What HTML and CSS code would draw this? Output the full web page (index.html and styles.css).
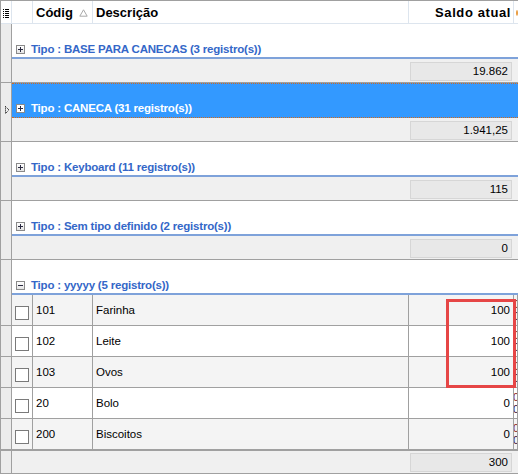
FILE: index.html
```html
<!DOCTYPE html>
<html>
<head>
<meta charset="utf-8">
<link rel="stylesheet" href="styles.css">
</head>
<body>
<div class="grid">
  <div class="hdr">
    <div class="ind hind">
      <svg width="10" height="22" viewBox="0 0 10 22">
        <g fill="#000">
          <rect x="3" y="8" width="1" height="1"/><rect x="5" y="8" width="4" height="1"/>
          <rect x="3" y="10" width="1" height="1"/><rect x="5" y="10" width="4" height="1"/>
          <rect x="3" y="12" width="1" height="1"/><rect x="5" y="12" width="4" height="1"/>
          <rect x="3" y="14" width="1" height="1"/><rect x="5" y="14" width="4" height="1"/>
          <rect x="3" y="16" width="1" height="1"/><rect x="5" y="16" width="4" height="1"/>
        </g>
      </svg>
    </div>
    <div class="c-chk hc"></div>
    <div class="c-cod hc">Códig<svg class="sort" width="9" height="8" viewBox="0 0 9 8"><path d="M4.5 0.8 L8.2 7.2 L0.8 7.2 Z" fill="none" stroke="#a8a8a8" stroke-width="1"/></svg></div>
    <div class="c-desc hc">Descrição</div>
    <div class="c-saldo hc"><span class="saldo-t">Saldo atual</span></div>
    <div class="c-x hc"><span class="odot"></span></div>
  </div>

  <div class="grp">
    <div class="ind"></div>
    <div class="gcell"><span class="exp"></span><span class="gtext">Tipo : BASE PARA CANECAS (3 registro(s))</span></div>
  </div>
  <div class="foot">
    <div class="ind"></div>
    <div class="fcell"><span class="sum">19.862</span></div>
  </div>

  <div class="grp sel">
    <div class="ind"><svg class="arrow" width="10" height="10" viewBox="0 0 10 10"><path d="M4.5 1.5 L8 5 L4.5 8.5 Z" fill="none" stroke="#000" stroke-width="1" stroke-dasharray="1 1"/></svg></div>
    <div class="gcell"><span class="exp"></span><span class="gtext">Tipo : CANECA (31 registro(s))</span></div>
  </div>
  <div class="foot">
    <div class="ind"></div>
    <div class="fcell"><span class="sum">1.941,25</span></div>
  </div>

  <div class="grp">
    <div class="ind"></div>
    <div class="gcell"><span class="exp"></span><span class="gtext">Tipo : Keyboard (11 registro(s))</span></div>
  </div>
  <div class="foot">
    <div class="ind"></div>
    <div class="fcell"><span class="sum">115</span></div>
  </div>

  <div class="grp">
    <div class="ind"></div>
    <div class="gcell"><span class="exp"></span><span class="gtext">Tipo : Sem tipo definido (2 registro(s))</span></div>
  </div>
  <div class="foot">
    <div class="ind"></div>
    <div class="fcell"><span class="sum">0</span></div>
  </div>

  <div class="grp">
    <div class="ind"></div>
    <div class="gcell"><span class="exp minus"></span><span class="gtext">Tipo : yyyyy (5 registro(s))</span></div>
  </div>

  <div class="rows">
    <div class="row alt">
      <div class="ind"></div>
      <div class="c-chk"><span class="cb"></span></div>
      <div class="c-cod">101</div>
      <div class="c-desc">Farinha</div>
      <div class="c-saldo">100</div>
      <div class="c-x"><span class="x1">0</span><span class="x2">0</span></div>
    </div>
    <div class="row">
      <div class="ind"></div>
      <div class="c-chk"><span class="cb"></span></div>
      <div class="c-cod">102</div>
      <div class="c-desc">Leite</div>
      <div class="c-saldo">100</div>
      <div class="c-x"><span class="x1">0</span><span class="x2">0</span></div>
    </div>
    <div class="row alt">
      <div class="ind"></div>
      <div class="c-chk"><span class="cb"></span></div>
      <div class="c-cod">103</div>
      <div class="c-desc">Ovos</div>
      <div class="c-saldo">100</div>
      <div class="c-x"><span class="x1">0</span><span class="x2">0</span></div>
    </div>
    <div class="row">
      <div class="ind"></div>
      <div class="c-chk"><span class="cb"></span></div>
      <div class="c-cod">20</div>
      <div class="c-desc">Bolo</div>
      <div class="c-saldo">0</div>
      <div class="c-x"><span class="x1">0</span><span class="x2">0</span></div>
    </div>
    <div class="row alt">
      <div class="ind"></div>
      <div class="c-chk"><span class="cb"></span></div>
      <div class="c-cod">200</div>
      <div class="c-desc">Biscoitos</div>
      <div class="c-saldo">0</div>
      <div class="c-x"><span class="x1">0</span><span class="x2">0</span></div>
    </div>
    <div class="redbox"></div>
  </div>
  <div class="foot last">
    <div class="ind"></div>
    <div class="fcell"><span class="sum">300</span></div>
  </div>
</div>
</body>
</html>
```

FILE: styles.css
```css
* { box-sizing: border-box; }
html, body { margin: 0; padding: 0; background: #fff; }
body {
  width: 518px;
  height: 476px;
  overflow: hidden;
  font-family: "Liberation Sans", Arial, sans-serif;
  font-size: 11.5px;
  color: #000;
}
.grid {
  border-left: 1px solid #a0a0a0;
  border-top: 1px solid #a0a0a0;
  width: 518px;
}
.ind {
  width: 11px;
  flex: none;
  background: #ececec;
  border-right: 1px solid #a0a0a0;
}

/* header */
.hdr {
  display: flex;
  height: 23px;
  border-bottom: 1px solid #dde5ee;
  background: #fff;
}
.hind { background: #fff; border-right: 1px solid #dde5ee; }
.hind svg { display: block; margin-left: -1px; }
.hc {
  display: flex;
  align-items: center;
  font-weight: bold;
  font-size: 13px;
  border-right: 1px solid #dde5ee;
}
.hdr .c-cod { padding-left: 3px; }
.hdr .c-desc { padding-left: 3px; }
.hdr .c-saldo { justify-content: flex-end; padding-right: 2px; }
.saldo-t { letter-spacing: 0.6px; }
.sort { margin-left: 6px; margin-top: 1px; }
.hdr .c-x { border-right: none; }
.odot {
  display: block;
  width: 6px; height: 6px;
  border-radius: 50%;
  background: #e89a3c;
  margin-left: 2px;
  margin-top: 1px;
}

/* columns */
.c-chk { width: 21px; flex: none; }
.c-cod { width: 60px; flex: none; }
.c-desc { width: 316px; flex: none; }
.c-saldo { width: 105px; flex: none; }
.c-x { flex: 1; overflow: hidden; }

/* group rows */
.grp { display: flex; height: 35px; }
.gcell {
  flex: 1;
  display: flex;
  align-items: center;
  padding-top: 17px;
  border-bottom: 2px solid #7ea2da;
  background: #fff;
}
.exp {
  position: relative;
  display: block;
  width: 9px; height: 9px;
  margin-left: 4px;
  margin-right: 6px;
  border: 1px solid #8a8a8a;
  background: linear-gradient(#ffffff, #e4e4e4);
}
.exp::before {
  content: "";
  position: absolute;
  left: 1px; top: 3px;
  width: 5px; height: 1px;
  background: #2a2a40;
}
.exp::after {
  content: "";
  position: absolute;
  left: 3px; top: 1px;
  width: 1px; height: 5px;
  background: #2a2a40;
}
.exp.minus::after { display: none; }
.gtext {
  font-weight: bold;
  font-size: 11.5px;
  letter-spacing: -0.2px;
  color: #3467c8;
  white-space: nowrap;
}
.sel .gcell {
  background: #3399ff;
  border-top: 1px dotted #d06a20;
  border-bottom: 1px dotted #d06a20;
  padding-top: 15px;
}
.sel .gtext { color: #fff; }
.sel .exp { background: #fff; }
.sel .ind {
  display: flex;
  align-items: flex-end;
  padding-bottom: 3px;
}
.arrow { display: block; margin-left: 0; }

/* footers */
.foot {
  display: flex;
  height: 24px;
  border-bottom: 1px solid #a0a0a0;
}
.fcell {
  flex: 1;
  background: #f0f0f0;
  padding-top: 3px;
}
.sum {
  display: block;
  margin-left: 398px;
  width: 102px;
  height: 19px;
  line-height: 17px;
  text-align: right;
  padding-right: 3px;
  background: #e8e8e8;
  border: 1px solid #d6d6d6;
}

/* data rows */
.rows { position: relative; }
.row {
  display: flex;
  height: 31px;
  border-bottom: 1px solid #a0a0a0;
  background: #fff;
}
.row.alt { background: #f4f4f4; }
.row .ind { background: #ececec; border-right: 1px solid #a0a0a0; }
.row > div:not(.ind) {
  border-right: 1px solid #a0a0a0;
  display: flex;
  align-items: center;
}
.row .c-chk { align-items: flex-start; padding-top: 5px; }
.cb {
  display: block;
  width: 14px; height: 14px;
  margin-left: 3px;
  border: 1px solid #7a7a7a;
  background: #fff;
}
.row .c-cod, .row .c-desc { padding-left: 3px; }
.row .c-saldo { justify-content: flex-end; padding-right: 3px; }
.row .c-x {
  border-right: none;
  flex-direction: column;
  align-items: flex-start;
  justify-content: center;
  line-height: 12px;
  padding-left: 1px;
  font-size: 11px;
}
.x1 { color: #8a1a1a; }
.x2 { color: #3a1040; }
.redbox {
  position: absolute;
  left: 445px;
  top: 4px;
  width: 70px;
  height: 89px;
  border: 3px solid #e64646;
}
.foot.last { border-top: 1px solid #a0a0a0; height: 24px; }
.foot.last .fcell { padding-top: 2px; }
```
